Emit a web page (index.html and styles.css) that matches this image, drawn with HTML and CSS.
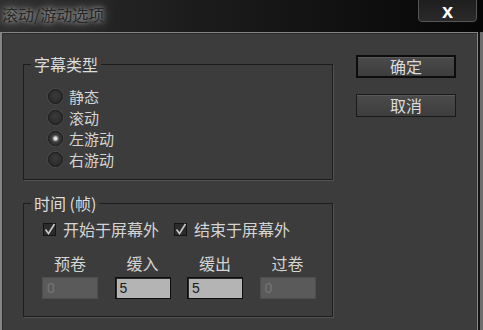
FILE: index.html
```html
<!DOCTYPE html>
<html lang="zh">
<head>
  <meta charset="UTF-8">
  <title>滚动/游动选项</title>
  <link rel="stylesheet" href="styles.css">
</head>
<body>

<!-- Title bar -->
<div class="titlebar">
  <span class="title">滚动/游动选项</span>
  <button class="close">x</button>
</div>

<!-- Dialog body -->
<div class="dialog">
  <div class="main">
    <fieldset class="group">
      <legend>字幕类型</legend>
      <div class="options">
        <label class="radio"><input type="radio" name="type">静态</label>
        <label class="radio"><input type="radio" name="type">滚动</label>
        <label class="radio"><input type="radio" name="type" checked>左游动</label>
        <label class="radio"><input type="radio" name="type">右游动</label>
      </div>
    </fieldset>

    <fieldset class="group time-group">
      <legend>时间 (帧)</legend>
      <div class="timing">
        <div class="checks">
          <label class="check">
            <span class="box"><svg width="13" height="13" viewBox="0 0 13 13"><path d="M2.5 6.5 L5.5 10.5 L11.5 1" fill="none" stroke="#c8c8c8" stroke-width="1.6"/></svg></span>开始于屏幕外
          </label>
          <label class="check">
            <span class="box"><svg width="13" height="13" viewBox="0 0 13 13"><path d="M2.5 6.5 L5.5 10.5 L11.5 1" fill="none" stroke="#c8c8c8" stroke-width="1.6"/></svg></span>结束于屏幕外
          </label>
        </div>
        <div class="frames">
          <div class="frame"><span>预卷</span><input type="text" value="0" disabled></div>
          <div class="frame"><span>缓入</span><input type="text" value="5"></div>
          <div class="frame"><span>缓出</span><input type="text" value="5"></div>
          <div class="frame"><span>过卷</span><input type="text" value="0" disabled></div>
        </div>
      </div>
    </fieldset>
  </div>

  <div class="actions">
    <button class="btn default">确定</button>
    <button class="btn">取消</button>
  </div>
</div>

</body>
</html>
```

FILE: styles.css
```css
body {
  margin: 0;
  width: 483px;
  height: 330px;
  overflow: hidden;
  background-color: #6e6e6e;
  font-family: "Noto Sans CJK SC", "Noto Sans", sans-serif;
  font-size: 16px;
  line-height: 20px;
  color: #d4d4d4;
}
.titlebar {
  height: 32px;
  display: flex;
  justify-content: space-between;
  align-items: flex-start;
  background: linear-gradient(90deg, #2e2e2e, #1c1c1c 40%, #060606);
}
.title {
  padding: 4px 0 0 2px;
  line-height: 20px;
  color: #262626;
  text-shadow: 0 0 4px rgba(255, 255, 255, 0.55), 0 0 10px rgba(255, 255, 255, 0.4), 0 0 18px rgba(255, 255, 255, 0.3);
}
.close {
  width: 61px;
  height: 25px;
  margin: -2px 5px 0 0;
  padding: 0;
  border: 1px solid #0a0a0a;
  border-radius: 0 0 5px 5px;
  background: linear-gradient(#1e1e1e, #2a2a2a);
  box-shadow: inset 0 0 0 1px #555;
  color: #fff;
  font-family: "Liberation Sans", sans-serif;
  font-size: 20px;
  font-weight: bold;
  line-height: 20px;
}
/* Dialog */
.dialog {
  box-sizing: border-box;
  width: 478px;
  height: 298px;
  display: flex;
  background-color: #3c3c3c;
  border: 1px solid #858585;
  border-left-width: 2px;
  border-bottom: none;
  box-shadow: inset 1px 1px 0 #2a2a2a, 2px 0 0 #141414;
}
.main {
  padding: 21px 0 0 21px;
}
.group {
  box-sizing: border-box;
  width: 310px;
  margin: 0;
  padding: 0;
  border: 1px solid #1d1d1d;
  box-shadow: 1px 1px 0 #525252;
}
.group legend {
  margin-left: 7px;
  padding: 0 3px;
  line-height: 20px;
  color: #dcdcdc;
}
.time-group {
  margin-top: 13px;
}
.options {
  display: flex;
  flex-direction: column;
  padding: 12px 0 9px 24px;
}
.radio {
  display: flex;
  align-items: center;
  gap: 6px;
  height: 21px;
  font-size: 15px;
  line-height: 21px;
}
.radio input {
  appearance: none;
  margin: 0;
  width: 15px;
  height: 15px;
  border-radius: 50%;
  border: 1px solid #1a1a1a;
  background: radial-gradient(circle at 50% 40%, #3a3a3a, #262626);
  box-shadow: 0 0 0 1px #474747;
}
.radio input:checked {
  background: radial-gradient(circle, #e0e0e0 0 1.5px, #777 2.5px, #3a3a3a 4px, #262626);
}
.timing {
  padding: 6px 0 17px 18px;
}
.checks {
  display: flex;
  gap: 15px;
  padding-left: 1px;
}
.check {
  display: flex;
  align-items: center;
  gap: 7px;
  height: 20px;
}
.box {
  box-sizing: border-box;
  width: 13px;
  height: 13px;
  border: 1px solid #141414;
  background-color: #2b2b2b;
  display: flex;
}
.box svg {
  margin: -1px 0 0 -1px;
  overflow: visible;
}
.frames {
  display: flex;
  gap: 16.5px;
  margin-top: 14px;
}
.frame {
  display: flex;
  flex-direction: column;
  align-items: center;
  gap: 4px;
}
.frame input {
  box-sizing: border-box;
  width: 56px;
  height: 22px;
  margin: 0;
  padding: 0 4px;
  border: 1px solid #0e0e0e;
  box-shadow: inset 1px 1px 0 #2a2a2a;
  background-color: #b4b4b4;
  color: #1a1a1a;
  font-family: "Liberation Sans", sans-serif;
  font-size: 14px;
}
.frame input:disabled {
  border-color: #4e4e4e;
  box-shadow: none;
  background-color: #5a5a5a;
  color: #767676;
}
/* Buttons */
.actions {
  display: flex;
  flex-direction: column;
  gap: 16px;
  padding-top: 22px;
  margin-left: 23px;
}
.btn {
  box-sizing: border-box;
  width: 100px;
  height: 23px;
  padding: 0;
  border: 1px solid #1a1a1a;
  background: linear-gradient(#4b4b4b, #3d3d3d);
  box-shadow: inset 0 1px 0 #5a5a5a;
  color: #dcdcdc;
  font-family: inherit;
  font-size: 16px;
  line-height: 19px;
}
.btn.default {
  border: 2px solid #0c0c0c;
}
```
